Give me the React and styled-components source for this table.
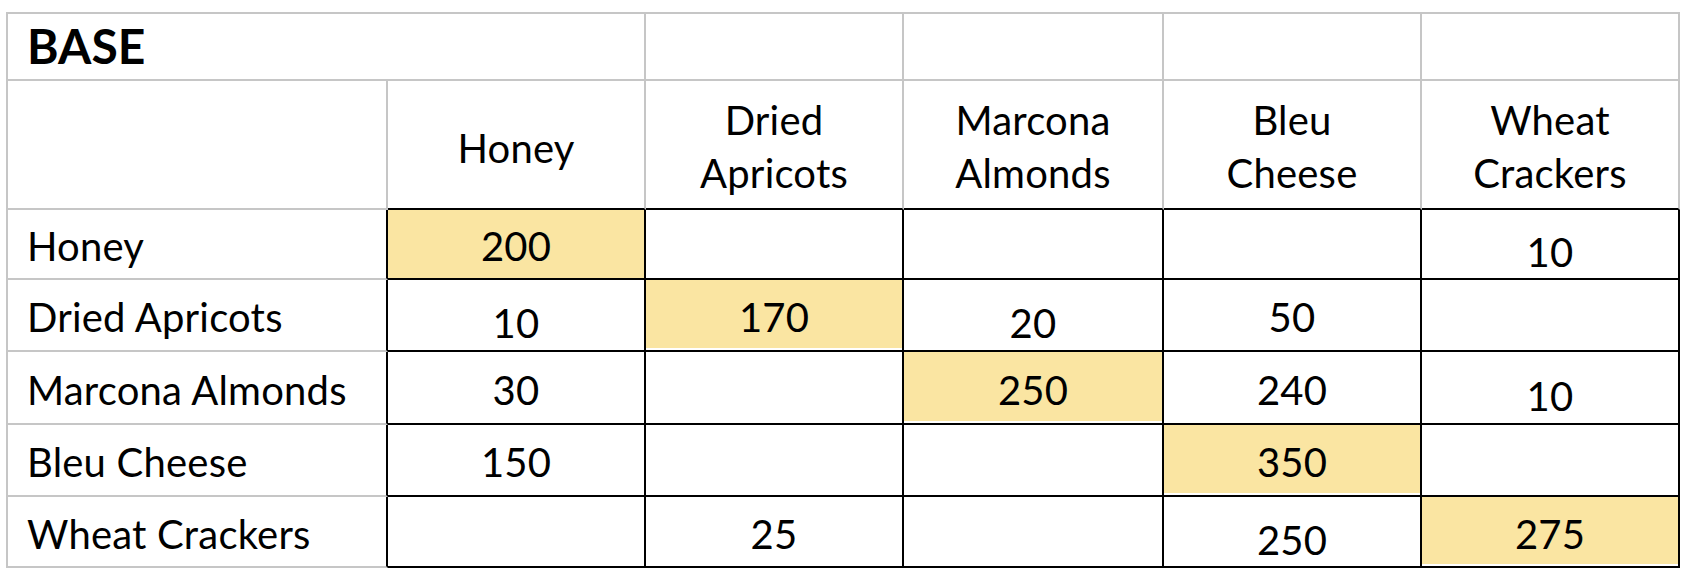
import styled, { createGlobalStyle, css } from "styled-components";

const GRAY = "#c6c6c6";
const INK = "#000";
const FILL = "#fae5a2";

const Global = createGlobalStyle`
  html, body { margin: 0; padding: 0; background: #fff; }
  body { font-family: "Lato", "Noto Sans", sans-serif; color: #000; }
`;

const Sheet = styled.div`
  display: grid;
  grid-template-columns: 380px 258px 258px 260px 258px 258px;
  grid-template-rows: 67px 129px 70px 72px 73px 72px 71px;
  width: fit-content;
  margin: 12px 0 0 6px;
  border-top: 2px solid ${GRAY};
  border-left: 2px solid ${GRAY};
`;

const Cell = styled.div`
  box-sizing: border-box;
  display: flex;
  align-items: center;
  border-right: 2px solid ${(p) => p.$right || GRAY};
  border-bottom: 2px solid ${(p) => p.$bottom || GRAY};
  font-size: 40px;
  line-height: 53px;
  letter-spacing: 0.2px;
  white-space: pre-line;
`;

const TitleCell = styled(Cell)`
  grid-column: span ${(p) => p.$span || 1};
  padding: 0 0 2px 19px;
  font-size: 48px;
  font-weight: 700;
  letter-spacing: 0;
`;

const HeadCell = styled(Cell)`
  justify-content: center;
  text-align: center;
  padding-top: ${(p) => (p.$single ? 8 : 4)}px;
`;

const LabelCell = styled(Cell)`
  padding: 5px 0 0 19px;
`;

const ValueCell = styled(Cell)`
  justify-content: center;
  padding-top: ${(p) => (p.$low ? 17 : 5)}px;
  ${(p) =>
    p.$hot &&
    css`
      background: ${p.$gap
        ? `linear-gradient(to top, #fff 2px, ${FILL} 2px)`
        : FILL};
    `}
`;

const items = [
  { label: "Honey", head: "Honey" },
  { label: "Dried Apricots", head: "Dried\nApricots" },
  { label: "Marcona Almonds", head: "Marcona\nAlmonds" },
  { label: "Bleu Cheese", head: "Bleu\nCheese" },
  { label: "Wheat Crackers", head: "Wheat\nCrackers" },
];

const values = [
  [200, "", "", "", 10],
  [10, 170, 20, 50, ""],
  [30, "", 250, 240, 10],
  [150, "", "", 350, ""],
  ["", 25, "", 250, 275],
];

// cells whose number sits a little lower in the sheet
const low = ["0-4", "1-0", "1-2", "2-4", "4-3"];

export default function App() {
  return (
    <>
      <Global />
      <Sheet>
        <TitleCell $span={2}>BASE</TitleCell>
        {[0, 1, 2, 3].map((i) => (
          <TitleCell key={i} />
        ))}

        <HeadCell />
        {items.map(({ head }) => (
          <HeadCell key={head} $bottom={INK} $single={!head.includes("\n")}>
            {head}
          </HeadCell>
        ))}

        {items.map(({ label }, r) => [
          <LabelCell key={label} $right={INK}>
            {label}
          </LabelCell>,
          ...values[r].map((v, c) => (
            <ValueCell
              key={`${r}-${c}`}
              $right={INK}
              $bottom={INK}
              $hot={r === c}
              $gap={r === c && r > 0}
              $low={low.includes(`${r}-${c}`)}
            >
              {v}
            </ValueCell>
          )),
        ])}
      </Sheet>
    </>
  );
}
